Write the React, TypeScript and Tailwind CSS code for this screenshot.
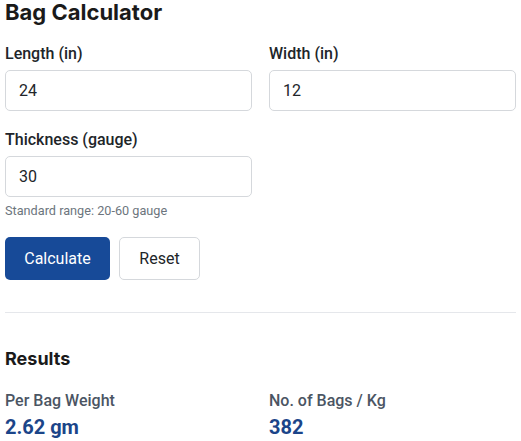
import React, { useState } from 'react';

const heading = { fontFamily: 'Inter, "Noto Sans", sans-serif' };
const body = { fontFamily: 'Roboto, "Liberation Sans", sans-serif' };

interface FieldProps {
  label: string;
  value: string;
  onChange: (v: string) => void;
}

const Field: React.FC<FieldProps> = ({ label, value, onChange }) => (
  <div>
    <label className="block text-[16px] leading-[24px] font-medium text-[#212529] mb-1">{label}</label>
    <input
      type="text"
      value={value}
      onChange={(e) => onChange(e.target.value)}
      className="block w-full h-[41px] px-[13px] text-[16px] text-[#212529] bg-white border border-[#d5d8dc] rounded-[5px] outline-none"
    />
  </div>
);

export default function App() {
  const [length, setLength] = useState('24');
  const [width, setWidth] = useState('12');
  const [gauge, setGauge] = useState('30');

  return (
    <div className="w-[521px] h-[441px] bg-white px-[5px] overflow-hidden" style={body}>
      <h2 className="text-[22px] leading-[24px] font-bold text-[#1a1a1a] mb-[18px]" style={heading}>
        Bag Calculator
      </h2>

      {/* Inputs */}
      <div className="grid grid-cols-2 gap-x-[17px] gap-y-[17px]">
        <Field label="Length (in)" value={length} onChange={setLength} />
        <Field label="Width (in)" value={width} onChange={setWidth} />
        <Field label="Thickness (gauge)" value={gauge} onChange={setGauge} />
      </div>
      <p className="mt-[6px] text-[12.7px] leading-[16px] text-[#6c757d]">Standard range: 20-60 gauge</p>

      <div className="flex gap-[9px] mt-[18px]">
        <button className="h-[43px] w-[105px] rounded-[5px] bg-[#174a98] text-white text-[16px]">Calculate</button>
        <button className="h-[43px] w-[81px] rounded-[5px] bg-white border border-[#d5d8dc] text-[#212529] text-[16px]">Reset</button>
      </div>

      <hr className="mt-[32px] border-0 border-t border-[#e5e7eb]" />

      {/* Results */}
      <h3 className="mt-[34px] text-[18px] leading-[24px] font-bold text-[#1a1a1a] mb-[18px]" style={heading}>
        Results
      </h3>
      <div className="grid grid-cols-2 gap-x-[17px]">
        <div>
          <div className="text-[16px] leading-[24px] font-medium text-[#4b5563]">Per Bag Weight</div>
          <div className="text-[20px] leading-[28px] font-bold text-[#1b4589]">2.62 gm</div>
        </div>
        <div>
          <div className="text-[16px] leading-[24px] font-medium text-[#4b5563]">No. of Bags / Kg</div>
          <div className="text-[20px] leading-[28px] font-bold text-[#1b4589]">382</div>
        </div>
      </div>
    </div>
  );
}
